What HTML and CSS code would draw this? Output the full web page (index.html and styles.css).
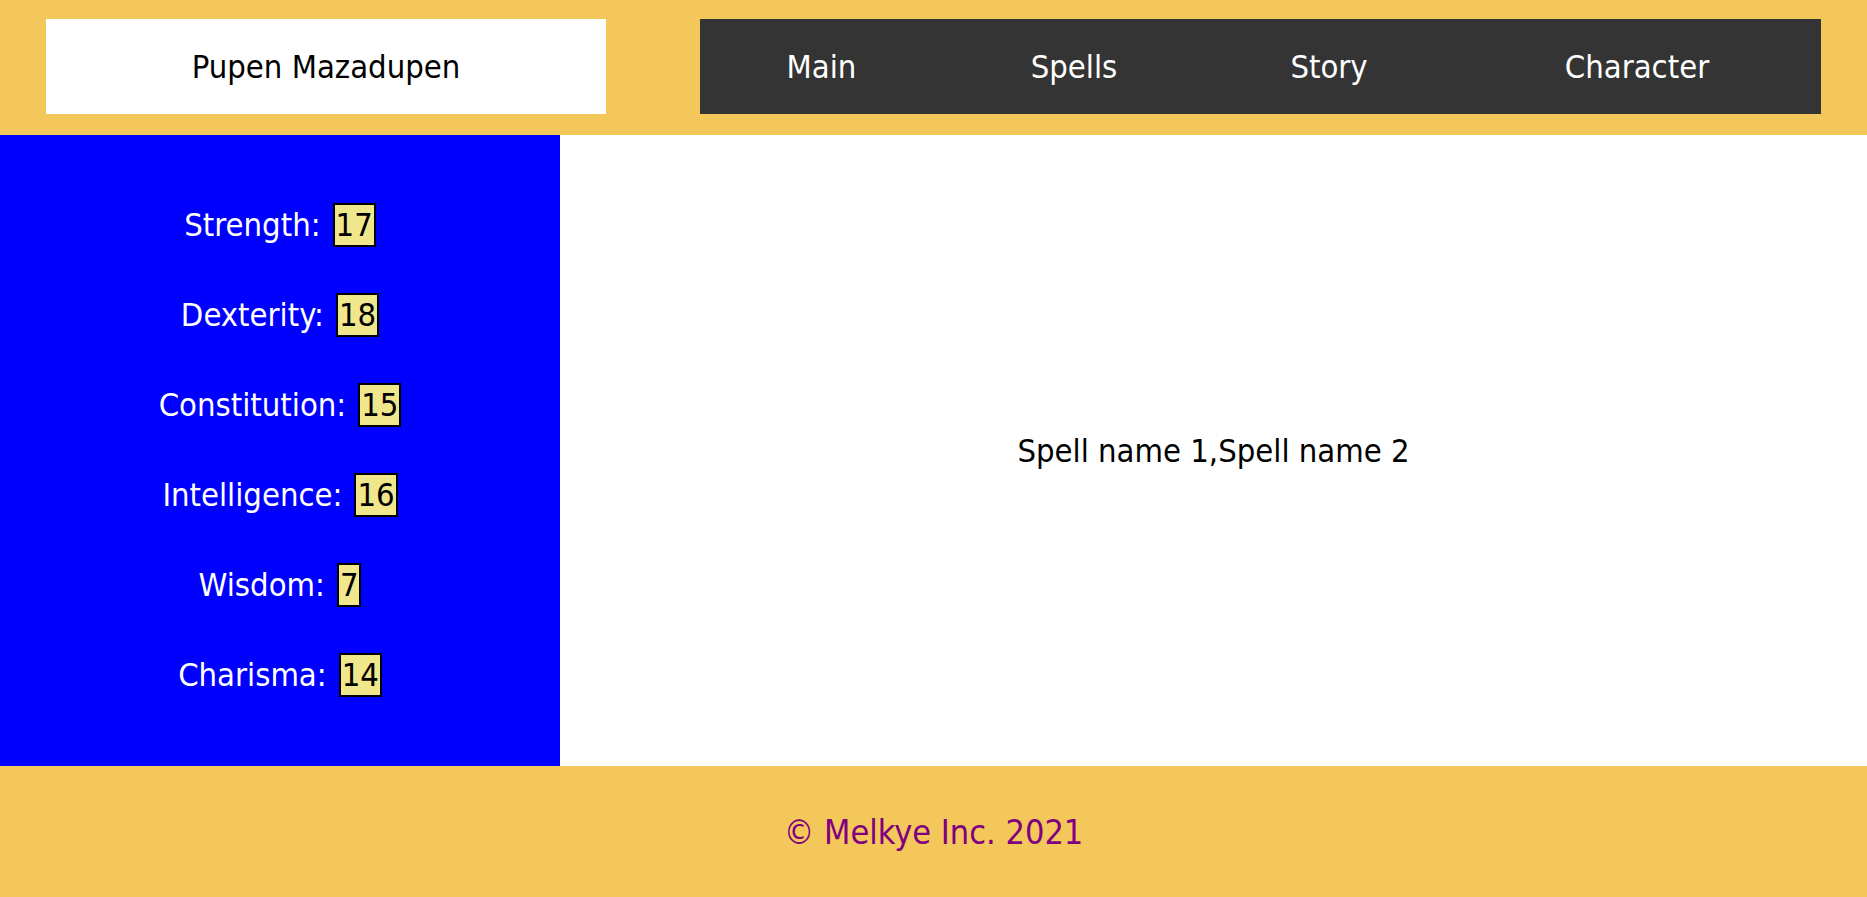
FILE: index.html
```html
<!DOCTYPE html>
<html lang="en">
<head>
<meta charset="utf-8">
<title>Pupen Mazadupen</title>
<link rel="stylesheet" href="styles.css">
</head>
<body>
<header class="header">
  <div class="title">Pupen Mazadupen</div>
  <nav class="nav">
    <a class="nav-item" href="#">Main</a>
    <a class="nav-item" href="#">Spells</a>
    <a class="nav-item" href="#">Story</a>
    <a class="nav-item" href="#">Character</a>
  </nav>
</header>
<div class="content">
  <aside class="stats">
    <div class="stat"><span class="label">Strength:</span><span class="value">17</span></div>
    <div class="stat"><span class="label">Dexterity:</span><span class="value">18</span></div>
    <div class="stat"><span class="label">Constitution:</span><span class="value">15</span></div>
    <div class="stat"><span class="label">Intelligence:</span><span class="value">16</span></div>
    <div class="stat"><span class="label">Wisdom:</span><span class="value">7</span></div>
    <div class="stat"><span class="label">Charisma:</span><span class="value">14</span></div>
  </aside>
  <main class="main">
    <p class="spells">Spell name 1,Spell name 2</p>
  </main>
</div>
<footer class="footer">© Melkye Inc. 2021</footer>
</body>
</html>
```
FILE: styles.css
```css
html, body {
  margin: 0;
  padding: 0;
}
body {
  font-family: "DejaVu Sans Condensed", "DejaVu Sans", sans-serif;
  font-stretch: condensed;
  font-size: 32.5px;
  background: #ffffff;
}
.header {
  background: #f4c75a;
  display: grid;
  grid-template-columns: 560px 1fr;
  column-gap: 94px;
  padding: 19px 46px 21px;
  height: 135px;
  box-sizing: border-box;
}
.title {
  background: #ffffff;
  color: #000000;
  display: flex;
  align-items: center;
  justify-content: center;
}
.nav {
  background: #343434;
  display: grid;
  grid-template-columns: 243px 262px 248px 368px;
  align-items: center;
}
.nav-item {
  color: #ffffff;
  text-decoration: none;
  text-align: center;
}
.content {
  display: grid;
  grid-template-columns: 560px 1fr;
}
.stats {
  background: #0000ff;
  display: flex;
  flex-direction: column;
  align-items: center;
  gap: 46px;
  padding: 68px 0 69px;
}
.stat {
  color: #ffffff;
  height: 44px;
  display: flex;
  align-items: center;
}
.value {
  display: inline-flex;
  align-items: center;
  justify-content: center;
  box-sizing: border-box;
  height: 44px;
  min-width: 20px;
  margin-left: 12px;
  padding: 0 1px;
  border: 2px solid #000000;
  background: #f0e68c;
  color: #000000;
}
.main {
  background: #ffffff;
  display: flex;
  align-items: center;
  justify-content: center;
}
.spells {
  margin: 0;
  color: #000000;
}
.footer {
  background: #f4c75a;
  color: #800080;
  height: 131px;
  font-size: 34px;
  display: flex;
  align-items: center;
  justify-content: center;
}
```
